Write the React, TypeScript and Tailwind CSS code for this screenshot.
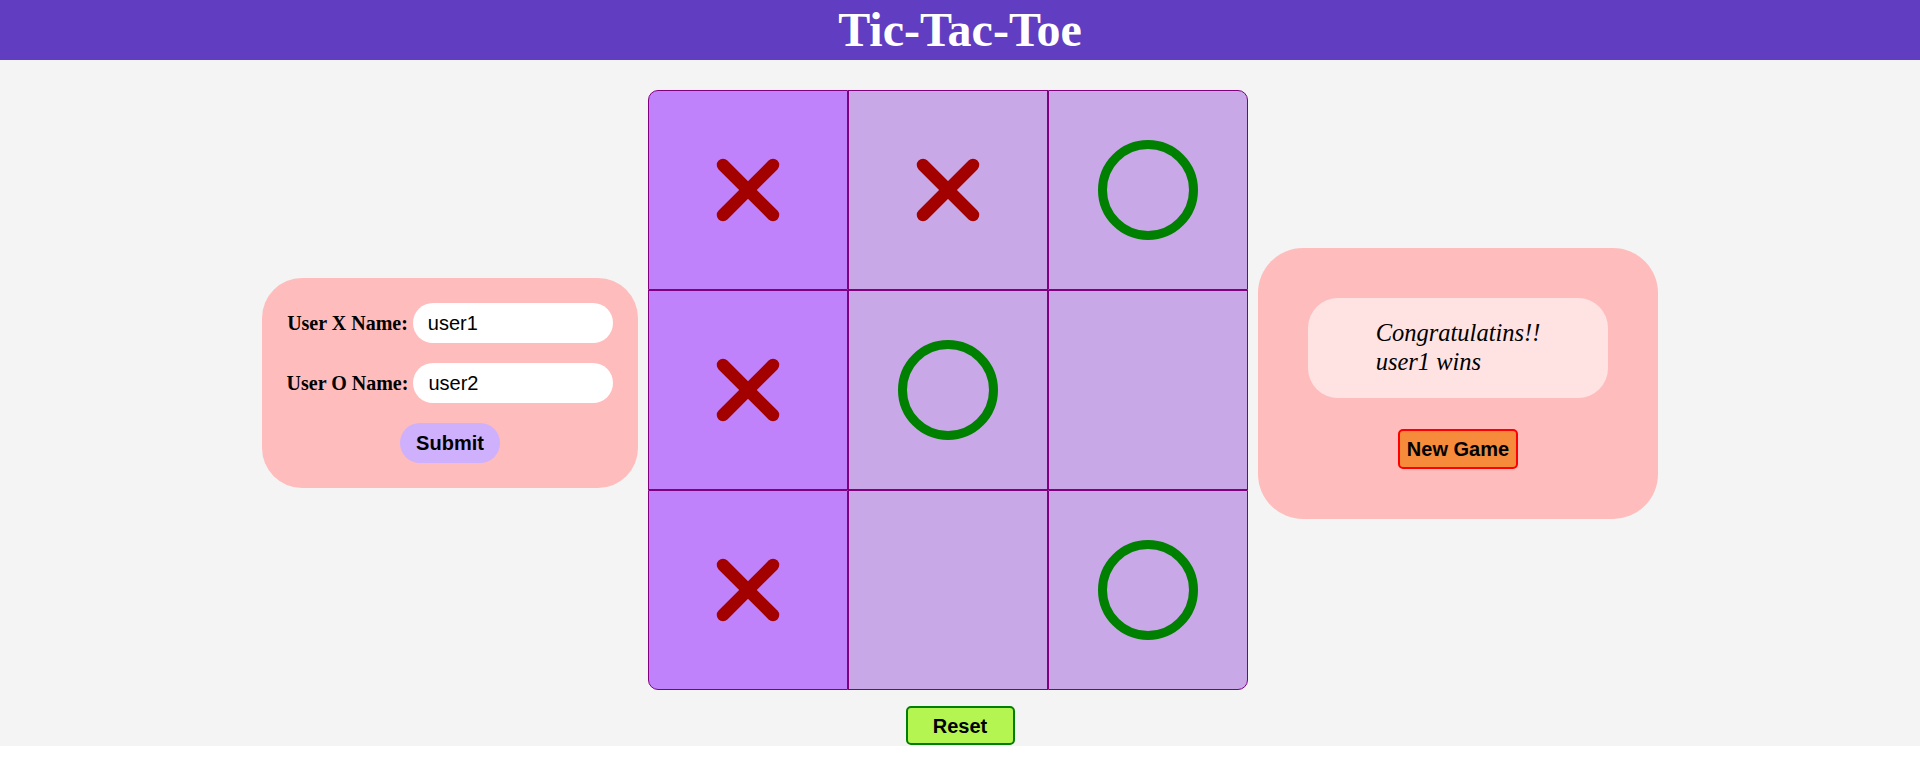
import { useState } from 'react';

type Mark = 'X' | 'O' | '';

function XMark() {
  return (
    <svg width="100" height="100" viewBox="0 0 24 24" fill="none" stroke="#a30000" strokeWidth="3" strokeLinecap="round">
      <path d="M18 6 6 18" />
      <path d="m6 6 12 12" />
    </svg>
  );
}

function OMark() {
  return (
    <svg width="100" height="100" viewBox="0 0 100 100" fill="none">
      <circle cx="50" cy="50" r="45.5" stroke="#008000" strokeWidth="9" />
    </svg>
  );
}

const corners = [
  'rounded-tl-[10px]', '', 'rounded-tr-[10px]',
  '', '', '',
  'rounded-bl-[10px]', '', 'rounded-br-[10px]',
];

export default function App() {
  const [nameX, setNameX] = useState('user1');
  const [nameO, setNameO] = useState('user2');
  const board: Mark[] = ['X', 'X', 'O', 'X', 'O', '', 'X', '', 'O'];
  const winLine = [0, 3, 6];

  return (
    <div className="min-h-screen bg-white font-['Liberation_Sans',Arial,sans-serif]">
      <header className="h-[60px] bg-[#613dc1] flex items-center justify-center">
        <h1 className="font-['Liberation_Serif',serif] font-bold text-[48px] leading-[1.15] text-white">Tic-Tac-Toe</h1>
      </header>

      <main className="bg-[#f4f4f4] flex flex-col items-center pb-px">
        <div className="flex items-center gap-[10px]">
          {/* Players */}
          <div className="w-[376px] p-[25px] rounded-[40px] bg-[#ffbcbc] flex flex-col items-center">
            <div className="flex items-center justify-center gap-[5px] h-[40px]">
              <label className="whitespace-nowrap shrink-0 font-['Liberation_Serif',serif] font-bold text-[20px] text-black">User X Name:</label>
              <input
                value={nameX}
                onChange={e => setNameX(e.target.value)}
                className="w-[200px] shrink-0 h-[40px] rounded-full bg-white px-[15px] text-[20px] text-black outline-none"
              />
            </div>
            <div className="flex items-center justify-center gap-[5px] h-[40px] mt-[20px]">
              <label className="whitespace-nowrap shrink-0 font-['Liberation_Serif',serif] font-bold text-[20px] text-black">User O Name:</label>
              <input
                value={nameO}
                onChange={e => setNameO(e.target.value)}
                className="w-[200px] shrink-0 h-[40px] rounded-full bg-white px-[15px] text-[20px] text-black outline-none"
              />
            </div>
            <button className="mt-[20px] w-[100px] h-[40px] rounded-full bg-[#ceb0fd] font-bold text-[20px] text-black">Submit</button>
          </div>

          {/* Board */}
          <div className="grid grid-cols-3 w-[600px] mt-[30px] mb-[16px]">
            {board.map((m, i) => (
              <div
                key={i}
                className={`w-[200px] h-[200px] border border-[#800080] flex items-center justify-center ${corners[i]} ${winLine.includes(i) ? 'bg-[#bf82fa]' : 'bg-[#c8a8e6]'}`}
              >
                {m === 'X' && <XMark />}
                {m === 'O' && <OMark />}
              </div>
            ))}
          </div>

          {/* Result */}
          <div className="w-[400px] px-[50px] pt-[50px] pb-[50px] rounded-[45px] bg-[#ffbcbc] flex flex-col items-center">
            <div className="w-[300px] h-[100px] rounded-[30px] bg-[#ffe3e3] flex items-center justify-center">
              <div className="font-['Liberation_Serif',serif] italic text-[24.5px] leading-[1.15] text-black">
                <div>Congratulatins!!</div>
                <div>user1 wins</div>
              </div>
            </div>
            <button className="mt-[31px] w-[120px] h-[40px] rounded-[5px] border-2 border-[#ff0000] bg-[#f68b3b] font-bold text-[20px] text-black">New Game</button>
          </div>
        </div>

        <button className="w-[109px] h-[39px] rounded-[5px] border-2 border-[#008000] bg-[#b5f552] font-bold text-[20px] text-black">Reset</button>
      </main>
    </div>
  );
}
